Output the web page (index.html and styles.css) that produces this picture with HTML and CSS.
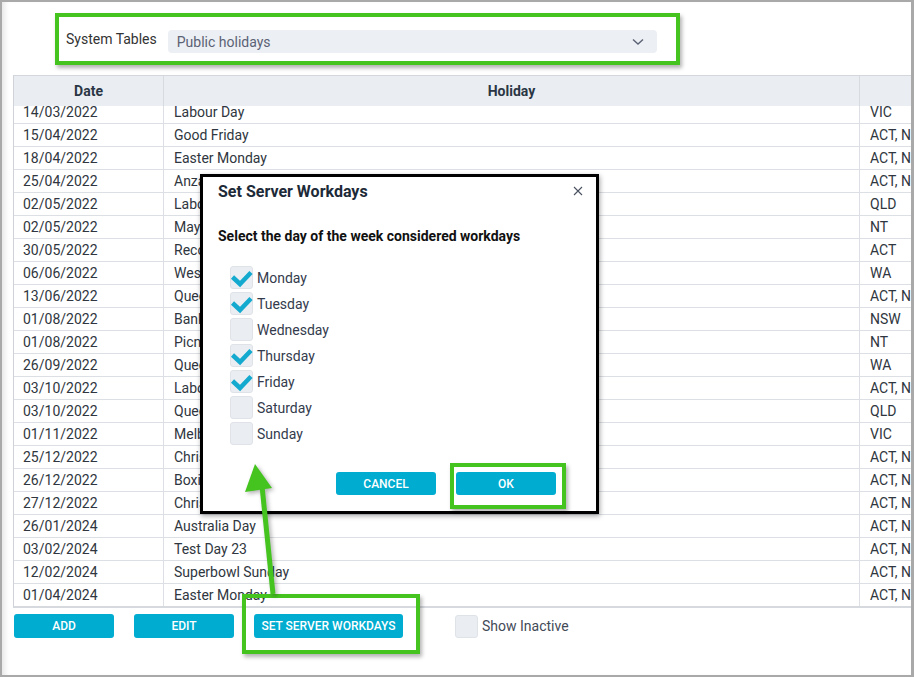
FILE: index.html
```html
<!DOCTYPE html>
<html lang="en">
<head>
<meta charset="UTF-8" />
<title>System Tables - Public holidays</title>
<link rel="stylesheet" href="styles.css">
</head>
<body>

<div class="window">

  <div class="filter-box">
    <label class="filter-label">System Tables</label>
    <div class="select">
      <span>Public holidays</span>
      <svg class="chevron" width="12" height="8" viewBox="0 0 12 8"><polyline points="1,1.5 6,6 11,1.5" fill="none" stroke="#5b6275" stroke-width="1.4"/></svg>
    </div>
  </div>

  <div class="grid">
    <div class="grid-head">
      <div class="cell">Date</div>
      <div class="cell">Holiday</div>
      <div class="cell">States</div>
    </div>
    <div class="grid-body">
      <div class="rows" id="rows"></div>
    </div>
  </div>

  <div class="actions">
    <button class="btn">ADD</button>
    <button class="btn">EDIT</button>
    <button class="btn btn-wide">SET SERVER WORKDAYS</button>
    <label class="check-label"><span class="checkbox"></span>Show Inactive</label>
  </div>

  <!-- modal -->
  <div class="dialog">
    <div class="dialog-head">
      <h3>Set Server Workdays</h3>
      <svg class="close" width="10" height="10" viewBox="0 0 10 10"><path d="M1 1 L9 9 M9 1 L1 9" stroke="#4a5260" stroke-width="1.1"/></svg>
    </div>
    <p class="dialog-text">Select the day of the week considered workdays</p>
    <div class="days" id="days"></div>
    <div class="dialog-buttons">
      <button class="btn">CANCEL</button>
      <button class="btn">OK</button>
    </div>
  </div>

  <!-- annotations -->
  <div class="mark mark-set"></div>
  <div class="mark mark-ok"></div>
  <svg class="arrow" width="914" height="677" viewBox="0 0 914 677">
    <line x1="262" y1="486" x2="273" y2="594" stroke="#45c420" stroke-width="5"/>
    <polygon points="255,464 245,492 272,488" fill="#45c420"/>
  </svg>

</div>

<script>
const holidays = [
["14/03/2022", "Labour Day", "VIC"],
["15/04/2022", "Good Friday", "ACT, NSW, NT, QLD, SA, TAS, VIC, WA"],
["18/04/2022", "Easter Monday", "ACT, NSW, NT, QLD, SA, TAS, VIC, WA"],
["25/04/2022", "Anzac Day", "ACT, NSW, NT, QLD, SA, TAS, VIC, WA"],
["02/05/2022", "Labour Day", "QLD"],
["02/05/2022", "May Day", "NT"],
["30/05/2022", "Reconciliation Day", "ACT"],
["06/06/2022", "Western Australia Day", "WA"],
["13/06/2022", "Queen's Birthday", "ACT, NSW, NT, SA, TAS, VIC"],
["01/08/2022", "Bank Holiday", "NSW"],
["01/08/2022", "Picnic Day", "NT"],
["26/09/2022", "Queen's Birthday", "WA"],
["03/10/2022", "Labour Day", "ACT, NSW, SA"],
["03/10/2022", "Queen's Birthday", "QLD"],
["01/11/2022", "Melbourne Cup", "VIC"],
["25/12/2022", "Christmas Day", "ACT, NSW, NT, QLD, SA, TAS, VIC, WA"],
["26/12/2022", "Boxing Day", "ACT, NSW, NT, QLD, SA, TAS, VIC, WA"],
["27/12/2022", "Christmas Day (additional)", "ACT, NSW, NT, QLD, SA, TAS, VIC, WA"],
["26/01/2024", "Australia Day", "ACT, NSW, NT, QLD, SA, TAS, VIC, WA"],
["03/02/2024", "Test Day 23", "ACT, NSW, NT, QLD, SA, TAS, VIC, WA"],
["12/02/2024", "Superbowl Sunday", "ACT, NSW, NT, QLD, SA, TAS, VIC, WA"],
["01/04/2024", "Easter Monday", "ACT, NSW, NT, QLD, SA, TAS, VIC, WA"]
];

const rows = document.getElementById("rows");
holidays.forEach(h => {
  const row = document.createElement("div");
  row.className = "row";
  h.forEach(v => {
    const c = document.createElement("div");
    c.className = "cell";
    c.textContent = v;
    row.appendChild(c);
  });
  rows.appendChild(row);
});

const tick = '<svg width="23" height="23" viewBox="0 0 23 23"><polyline points="2.5,11 10,18 21,6.5" fill="none" stroke="#14a9cf" stroke-width="4.5" stroke-linejoin="miter"/></svg>';
const days = [["Monday", 1], ["Tuesday", 1], ["Wednesday", 0], ["Thursday", 1], ["Friday", 1], ["Saturday", 0], ["Sunday", 0]];
const list = document.getElementById("days");
days.forEach(d => {
  const item = document.createElement("label");
  item.className = "day";
  item.innerHTML = '<span class="checkbox">' + (d[1] ? tick : "") + '</span>' + d[0];
  list.appendChild(item);
});
</script>

</body>
</html>
```

FILE: styles.css
```css
* { box-sizing: border-box; }

html, body {
  margin: 0; padding: 0;
  font-family: Roboto, 'Liberation Sans', Arial, sans-serif;
  background: #ffffff;
}

.window {
  position: relative;
  width: 914px; height: 677px;
  border: 2px solid #a9a9a9;
  border-right-width: 3px;
  background: #fff;
  overflow: hidden;
  box-shadow: inset 6px 0 6px -4px rgba(0,0,0,0.12);
}

/* top filter, with the green highlight round it */
.filter-box {
  display: flex; align-items: center;
  width: 625px; height: 52px;
  margin: 11px 0 0 53px;
  padding: 9px 19px 4px 7px;
  border: 4px solid #45c420;
  box-shadow: 2px 3px 4px rgba(0,0,0,0.3);
}

.filter-label {
  font-size: 14px; color: #333;
  margin-right: 11px;
  position: relative; top: -3px;
}

.select {
  flex: 1;
  display: flex; align-items: center; justify-content: space-between;
  height: 23px;
  padding: 0 13px 0 9px;
  background: #eceff3;
  border-radius: 4px;
  font-size: 14px; color: #5b6275;
}

/* grid */
.grid {
  width: 1000px;
  margin: 10px 0 0 11px;
  border-top: 1px solid #d3d7db;
  border-left: 1px solid #cfd3d7;
  border-bottom: 2px solid #d6dade;
}

.grid-head, .row {
  display: grid;
  grid-template-columns: 150px 696px 150px;
}

.grid-head {
  height: 30px;
  background: #eaeef2;
  font-weight: bold; font-size: 14px; color: #2b3645;
}

.grid-head .cell {
  display: flex; align-items: center; justify-content: center;
  border-right: 1px solid #d7dbdf;
}

.grid-body {
  height: 500px;
  overflow: hidden;
}

.rows { margin-top: -5px; }

.row {
  height: 23px;
  font-size: 14px; color: #2f3640;
}

.row .cell {
  padding-left: 9px;
  line-height: 22px;
  border-bottom: 1px solid #dcdfe3;
  border-right: 1px solid #dcdfe3;
  white-space: nowrap;
  overflow: hidden;
}

.row .cell + .cell { padding-left: 10px; }

/* buttons */
.actions {
  display: flex; align-items: center;
  margin: 6px 0 0 12px;
}

.btn {
  height: 24px; width: 100px;
  margin-right: 20px;
  padding: 0;
  background: #00acd0; color: #fff;
  border: none; border-radius: 3px;
  font-family: inherit; font-size: 12px; font-weight: 500;
}

.btn-wide { width: 149px; margin-right: 52px; }

.checkbox {
  display: inline-flex;
  width: 23px; height: 23px;
  background: #eaeef2;
  border: 1px solid #dfe3e8;
  border-radius: 3px;
  margin-right: 4px;
  overflow: visible;
}

.checkbox svg { margin: -1px 0 0 -1px; flex: none; }

.check-label {
  display: flex; align-items: center;
  font-size: 14px; color: #434a57;
}

/* modal */
.dialog {
  position: absolute; left: 198px; top: 172px;
  width: 399px; height: 340px;
  border: 3px solid #000;
  background: #fff;
  box-shadow: 1px 2px 5px rgba(0,0,0,0.35);
}

.dialog-head {
  display: flex; justify-content: space-between; align-items: center;
  height: 20px;
  margin-top: 4px;
  padding: 0 13px 0 15px;
}

.dialog-head h3 {
  margin: 0;
  font-size: 16px; font-weight: bold; color: #1d2a38;
}

.dialog-text {
  margin: 25px 0 0 15px;
  line-height: 20px;
  font-size: 14px; font-weight: bold; color: #111;
}

.days {
  display: flex; flex-direction: column; gap: 3px;
  margin: 20px 0 0 27px;
}

.day {
  display: flex; align-items: center;
  font-size: 14px; color: #343b4d;
}

.dialog-buttons {
  display: flex; justify-content: flex-end;
  margin-top: 27px;
  padding-right: 20px;
}

.dialog-buttons .btn { height: 23px; }

/* green annotations */
.mark {
  position: absolute;
  border: 4px solid #45c420;
  box-shadow: 2px 3px 4px rgba(0,0,0,0.3);
  pointer-events: none;
}

.mark-set { left: 240px; top: 592px; width: 178px; height: 60px; }
.mark-ok { left: 448px; top: 461px; width: 116px; height: 46px; }

.arrow {
  position: absolute; left: -2px; top: -2px;
  pointer-events: none;
  filter: drop-shadow(2px 2px 2px rgba(0,0,0,0.3));
}
```
